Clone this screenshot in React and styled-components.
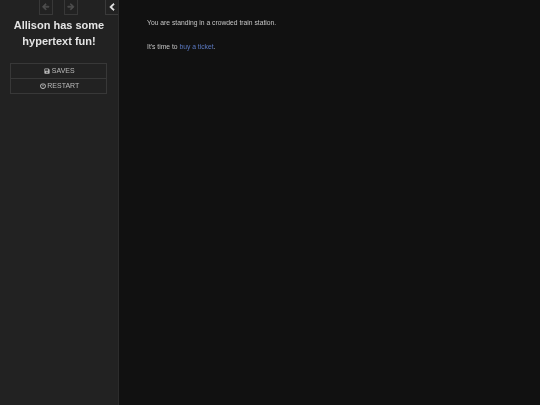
import styled, { createGlobalStyle } from "styled-components";
import { FaArrowLeft, FaArrowRight, FaChevronLeft, FaSave, FaPowerOff } from "react-icons/fa";

const GlobalStyle = createGlobalStyle`
  html, body {
    margin: 0;
    height: 100%;
    background: #111;
    overflow: hidden;
  }
  #root {
    height: 100%;
  }
`;

export default function App() {
  return (
    <Page>
      <GlobalStyle />
      <Sidebar>
        <StowButton>
          <FaChevronLeft />
        </StowButton>
        <History>
          <HistoryButton>
            <FaArrowLeft />
          </HistoryButton>
          <HistoryButton>
            <FaArrowRight />
          </HistoryButton>
        </History>
        <Title>Allison has some hypertext fun!</Title>
        <Menu>
          <MenuItem>
            <FaSave />
            SAVES
          </MenuItem>
          <MenuItem>
            <FaPowerOff />
            RESTART
          </MenuItem>
        </Menu>
      </Sidebar>
      <Story>
        <Para>You are standing in a crowded train station.</Para>
        <Para>
          It's time to <Link href="#">buy a ticket</Link>.
        </Para>
      </Story>
    </Page>
  );
}

const Page = styled.div`
  display: flex;
  height: 100%;
  font-family: "Liberation Sans", Arial, sans-serif;
  background: #111;
  color: #eee;
`;

const Sidebar = styled.aside`
  position: relative;
  box-sizing: border-box;
  flex: 0 0 119px;
  height: 100%;
  background: #222;
  border-right: 1px solid #2c2c2c;
`;

const StowButton = styled.button`
  position: absolute;
  top: 0;
  right: 0;
  box-sizing: border-box;
  display: flex;
  align-items: center;
  justify-content: center;
  width: 13px;
  height: 15px;
  padding: 0;
  background: #222;
  border: 1px solid #3a3a3a;
  border-right: 0;
  border-top: 0;
  color: #eee;
  font-size: 8px;

  svg {
    stroke: currentColor;
    stroke-width: 50;
  }
`;

const History = styled.div`
  display: flex;
  justify-content: center;
  gap: 11px;
  padding-right: 1px;
  height: 15px;
`;

const HistoryButton = styled.button`
  box-sizing: border-box;
  display: flex;
  align-items: center;
  justify-content: center;
  width: 14px;
  height: 15px;
  padding: 0;
  background: transparent;
  border: 1px solid #383838;
  border-top: 0;
  color: #505050;
  font-size: 7.5px;

  svg {
    stroke: currentColor;
    stroke-width: 40;
  }
`;

const Title = styled.h1`
  margin: 2px 0 0;
  padding: 0 6px;
  font-size: 11px;
  line-height: 16px;
  font-weight: 700;
  text-align: center;
  color: #e4e4e4;
  will-change: transform;
`;

const Menu = styled.nav`
  display: flex;
  flex-direction: column;
  margin: 14px 11px 0 10px;
  border: 1px solid #383838;
`;

const MenuItem = styled.a`
  box-sizing: content-box;
  display: flex;
  align-items: center;
  justify-content: center;
  gap: 1.5px;
  height: 13px;
  padding: 0 0 1px 2px;
  font-size: 7px;
  color: #bbb;
  will-change: transform;

  & + & {
    border-top: 1px solid #383838;
  }

  svg {
    font-size: 6px;
  }
`;

const Story = styled.main`
  flex: 1;
  padding: 18px 0 0 28px;
`;

const Para = styled.p`
  margin: 0 0 15px;
  font-size: 6.75px;
  line-height: 9px;
  color: #c4c4c4;
  will-change: transform;
`;

const Link = styled.a`
  color: #5a78c0;
  text-decoration: none;
`;
